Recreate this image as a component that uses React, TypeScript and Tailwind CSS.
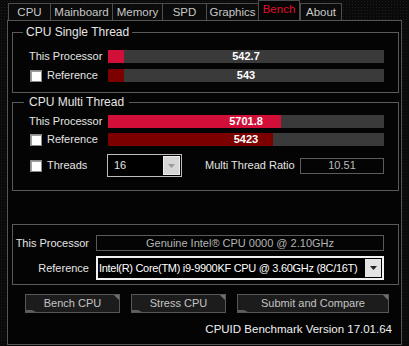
import React from 'react';

const tabs = ['CPU', 'Mainboard', 'Memory', 'SPD', 'Graphics', 'Bench', 'About'];
const tabWidths: Record<string, string> = {
  CPU: 'w-[42px]',
  Mainboard: 'w-[62px]',
  Memory: 'w-[50px]',
  SPD: 'w-[44px]',
  Graphics: 'w-[52px]',
  Bench: 'w-[42px]',
  About: 'w-[42px]',
};

function Check() {
  return <span className="block w-[12px] h-[12px] bg-white border border-[#8a8a8a] shadow-[inset_1px_1px_0_#a0a0a0]" />;
}

function Arrow({ color }: { color: string }) {
  return (
    <svg width="7" height="4" viewBox="0 0 7 4">
      <path d="M0 0h7L3.5 4z" fill={color} />
    </svg>
  );
}

function Bar({ value, pct, fill }: { value: string; pct: number; fill: string }) {
  return (
    <div className="relative w-[276px] h-[13px] bg-[#3a3a3a]">
      <div className={`h-full ${fill}`} style={{ width: `${pct}%` }} />
      <span className="absolute inset-0 flex items-center justify-center font-bold text-white leading-none">{value}</span>
    </div>
  );
}

function Btn({ label, w }: { label: string; w: string }) {
  return (
    <div className={`relative ${w} h-[19px] bg-[#1c1c1c] border border-[#575757] flex items-center justify-center text-[#c4c4c4]`}>
      <span className="absolute top-0 right-0 w-0 h-0 border-t-[5px] border-l-[5px] border-t-[#6e6e6e] border-l-transparent" />
      <span className="absolute bottom-0 left-0 w-[10px] h-0 border-b-[2px] border-r-[4px] border-b-[#5e5e5e] border-r-transparent" />
      {label}
    </div>
  );
}

export default function App() {
  return (
    <div className="w-[409px] h-[346px] overflow-hidden bg-[#0a0a0a] bg-[radial-gradient(circle,#1d1d1d_0.8px,transparent_1px)] bg-[length:3px_3px] font-['Liberation_Sans',Arial,sans-serif] text-[11px] leading-[13px] text-[#e4e4e4]">
      {/* Tabs */}
      <div className="flex items-end h-[20px] pl-[8px] text-[11.5px]">
        {tabs.map((t, i) => {
          const active = t === 'Bench';
          return (
            <div
              key={t}
              className={`${tabWidths[t]} flex items-center justify-center border-t border-l border-[#4e4e4e] ${
                i === tabs.length - 1 ? 'border-r' : ''
              } ${active ? 'h-[20px] bg-[#050505] text-[#e0102c] border-r pb-[2px]' : 'h-[17px] bg-[#0b0b0b] text-[#c8c8c8]'}`}
            >
              {t}
            </div>
          );
        })}
      </div>

      {/* Panel */}
      <div className="ml-[7px] w-[395px] h-[325px] border border-[#555] bg-[#040404] pl-[4px] pt-[5px]">
        {/* Single thread */}
        <fieldset className="w-[387px] border border-[#5a5a5a] pb-[10px]">
          <legend className="ml-[10px] px-[3px] text-[12px]">CPU Single Thread</legend>
          <div className="mt-[11px] flex items-center h-[13px]">
            <div className="w-[95px] pl-[16px]">This Processor</div>
            <Bar value="542.7" pct={5.8} fill="bg-[#d20f38]" />
          </div>
          <div className="mt-[6px] flex items-center h-[13px]">
            <div className="w-[95px] pl-[17px] flex items-center gap-[5px]">
              <Check />
              <span>Reference</span>
            </div>
            <Bar value="543" pct={5.8} fill="bg-[#7c0000]" />
          </div>
        </fieldset>

        {/* Multi thread */}
        <fieldset className="mt-[3px] w-[387px] border border-[#5a5a5a] pb-[13px]">
          <legend className="ml-[11px] px-[5px] text-[12px]">CPU Multi Thread</legend>
          <div className="mt-[6px] flex items-center h-[13px]">
            <div className="w-[95px] pl-[16px]">This Processor</div>
            <Bar value="5701.8" pct={62.7} fill="bg-[#d20f38]" />
          </div>
          <div className="mt-[5px] flex items-center h-[13px]">
            <div className="w-[95px] pl-[17px] flex items-center gap-[5px]">
              <Check />
              <span>Reference</span>
            </div>
            <Bar value="5423" pct={59.8} fill="bg-[#7c0000]" />
          </div>
          <div className="mt-[8px] flex items-center h-[23px]">
            <div className="w-[94px] pl-[17px] flex items-center gap-[5px]">
              <Check />
              <span>Threads</span>
            </div>
            <div className="w-[75px] h-[23px] border border-[#bdbdbd] bg-black flex items-center justify-between pl-[6px] pr-[1px]">
              <span>16</span>
              <div className="w-[17px] h-[19px] bg-[#d6d6d6] border border-[#eeeeee] flex items-center justify-center">
                <Arrow color="#9a9a9a" />
              </div>
            </div>
            <div className="ml-[23px] w-[95px]">Multi Thread Ratio</div>
            <div className="w-[84px] h-[16px] border border-[#5c5c5c] flex items-center justify-center text-[#bcbcbc]">10.51</div>
          </div>
        </fieldset>

        {/* Processor / reference */}
        <div className="mt-[33px] w-[387px] border border-[#5a5a5a] pt-[10px] pb-[4px]">
          <div className="flex items-center h-[16px]">
            <div className="w-[76px] text-right">This Processor</div>
            <div className="ml-[7px] w-[288px] h-[16px] border border-[#5a5a5a] flex items-center justify-center text-[#b4b4b4]">
              Genuine Intel® CPU 0000 @ 2.10GHz
            </div>
          </div>
          <div className="mt-[5px] flex items-center h-[24px]">
            <div className="w-[76px] text-right">Reference</div>
            <div className="ml-[7px] w-[288px] h-[24px] border-2 border-[#f2f2f2] bg-black flex items-center justify-between pl-[1px] pr-[1px] text-white">
              <span className="whitespace-nowrap text-[11px] tracking-[-0.3px]">Intel(R) Core(TM) i9-9900KF CPU @ 3.60GHz (8C/16T)</span>
              <div className="w-[16px] h-[18px] bg-[#e4e4e4] flex items-center justify-center">
                <Arrow color="#222" />
              </div>
            </div>
          </div>
        </div>

        {/* Buttons */}
        <div className="mt-[9px] pl-[13px] flex gap-[11px]">
          <Btn label="Bench CPU" w="w-[95px]" />
          <Btn label="Stress CPU" w="w-[95px]" />
          <Btn label="Submit and Compare" w="w-[152px]" />
        </div>

        <div className="mt-[10px] pr-[9px] text-right text-[#f0f0f0] text-[11.5px]">CPUID Benchmark Version 17.01.64</div>
      </div>
    </div>
  );
}
